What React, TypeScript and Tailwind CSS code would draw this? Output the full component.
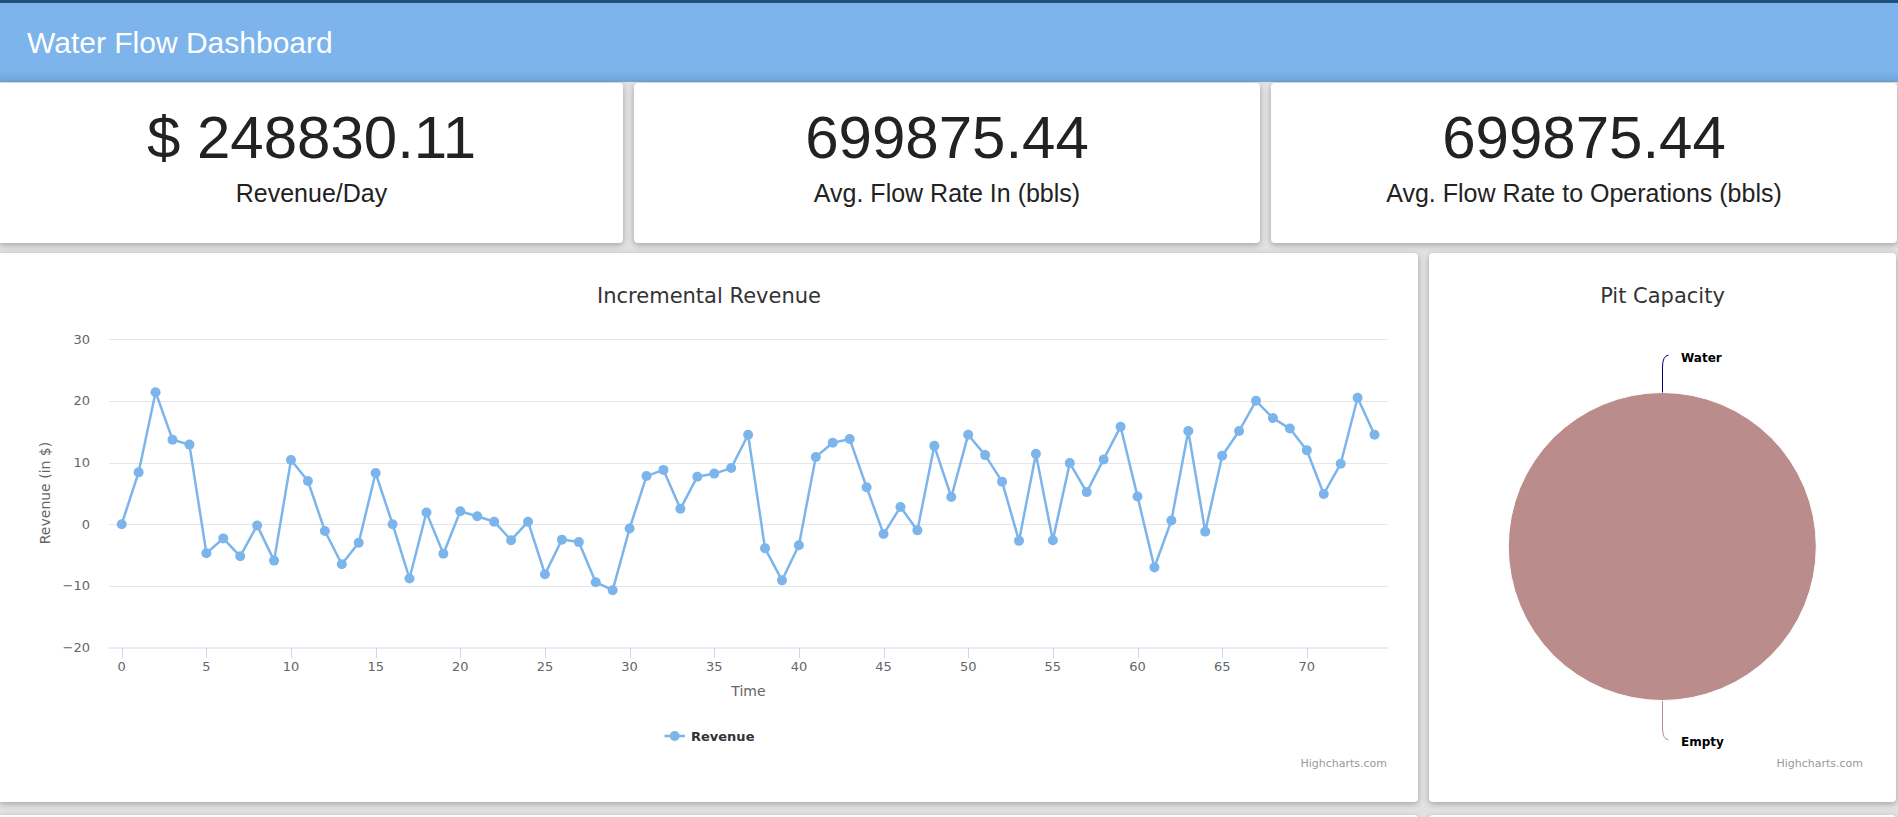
import React from 'react'

const revenue = [
  0, 8.4, 21.4, 13.7, 12.9, -4.7, -2.3, -5.2, -0.2, -5.9,
  10.4, 7.0, -1.1, -6.5, -3.0, 8.3, 0.0, -8.8, 1.9, -4.8,
  2.1, 1.3, 0.4, -2.6, 0.4, -8.1, -2.5, -2.9, -9.4, -10.7,
  -0.7, 7.8, 8.8, 2.5, 7.7, 8.2, 9.1, 14.5, -3.9, -9.1,
  -3.4, 10.9, 13.2, 13.8, 6.0, -1.6, 2.8, -1.0, 12.7, 4.4,
  14.5, 11.2, 6.9, -2.7, 11.4, -2.6, 9.9, 5.2, 10.5, 15.8,
  4.5, -7.0, 0.6, 15.1, -1.2, 11.1, 15.1, 20.0, 17.2, 15.5,
  12.0, 4.9, 9.8, 20.5, 14.5,
]

const stats = [
  { value: '$ 248830.11', label: 'Revenue/Day', width: 'w-[623px] rounded-l-none' },
  { value: '699875.44', label: 'Avg. Flow Rate In (bbls)', width: 'w-[626px]' },
  { value: '699875.44', label: 'Avg. Flow Rate to Operations (bbls)', width: 'w-[626px]' },
]

// plot geometry (px, relative to the chart card)
const PLOT_LEFT = 109
const PLOT_RIGHT = 1388
const xAt = (i: number) => 121.7 + i * 16.93
const yAt = (v: number) => 271.2 - v * 6.17
const fmt = (n: number) => (n < 0 ? '\u2212' + Math.abs(n) : String(n))

function StatCard({ value, label, width }: { value: string; label: string; width: string }) {
  return (
    <div className={`${width} h-[160px] shrink-0 rounded-[4px] bg-white shadow-[0_2px_6px_rgba(0,0,0,0.28)] flex flex-col items-center pt-[25px] text-[#222] font-['Liberation_Sans',Arial,sans-serif]`}>
      <div className="text-[60px] leading-[60px] whitespace-nowrap">{value}</div>
      <div className="mt-[13px] text-[25px] leading-[25px] whitespace-nowrap">{label}</div>
    </div>
  )
}

function RevenueChart() {
  const points = revenue.map((v, i) => [xAt(i), yAt(v)] as const)
  const d = points.map(([x, y], i) => `${i ? 'L' : 'M'}${x.toFixed(1)} ${y.toFixed(1)}`).join(' ')
  const grid = [30, 20, 10, 0, -10]
  const ticks = Array.from({ length: 15 }, (_, k) => k * 5)

  return (
    <svg width={1418} height={549} className="block font-['DejaVu_Sans',sans-serif]">
      <text x={709} y={50} textAnchor="middle" fontSize={21} fill="#333333">
        Incremental Revenue
      </text>

      {grid.map((v) => (
        <line key={v} x1={PLOT_LEFT} x2={PLOT_RIGHT} y1={Math.round(yAt(v)) + 0.5} y2={Math.round(yAt(v)) + 0.5} stroke="#e6e6e6" />
      ))}
      {[...grid, -20].map((v) => (
        <text key={v} x={90} y={yAt(v) + 4.5} textAnchor="end" fontSize={13} fill="#666666">
          {fmt(v)}
        </text>
      ))}

      {/* x axis */}
      <line x1={PLOT_LEFT} x2={PLOT_RIGHT} y1={395} y2={395} stroke="#ccd6eb" />
      {ticks.map((t) => (
        <g key={t}>
          <line x1={Math.round(xAt(t)) + 0.5} x2={Math.round(xAt(t)) + 0.5} y1={395} y2={405} stroke="#ccd6eb" />
          <text x={xAt(t)} y={417.5} textAnchor="middle" fontSize={13} fill="#666666">
            {t}
          </text>
        </g>
      ))}
      <text x={748.5} y={442.5} textAnchor="middle" fontSize={14} fill="#666666">
        Time
      </text>
      <text transform="translate(50,240) rotate(-90)" textAnchor="middle" fontSize={14} fill="#666666">
        Revenue (in $)
      </text>

      {/* series */}
      <path d={d} fill="none" stroke="#7cb5ec" strokeWidth={2.5} strokeLinejoin="round" strokeLinecap="round" />
      {points.map(([x, y], i) => (
        <circle key={i} cx={x} cy={y} r={5} fill="#7cb5ec" />
      ))}

      {/* legend */}
      <line x1={664.5} x2={685} y1={483} y2={483} stroke="#7cb5ec" strokeWidth={2.5} />
      <circle cx={674.7} cy={483} r={5} fill="#7cb5ec" />
      <text x={691} y={488} fontSize={13} fontWeight="bold" fill="#333333">
        Revenue
      </text>

      <text x={1387} y={514} textAnchor="end" fontSize={11} fill="#999999">
        Highcharts.com
      </text>
    </svg>
  )
}

function PitChart() {
  return (
    <svg width={467} height={549} className="block font-['DejaVu_Sans',sans-serif]">
      <text x={233.5} y={50} textAnchor="middle" fontSize={21} fill="#333333">
        Pit Capacity
      </text>

      <circle cx={233.3} cy={293.5} r={154} fill="#bb8c8c" stroke="#ffffff" strokeWidth={1} />

      <path d="M233.5 139.5 L233.5 114 Q233.5 103 239.5 102" fill="none" stroke="#000080" strokeWidth={1} />
      <text x={252} y={108.5} fontSize={12} fontWeight="bold" fill="#000000">
        Water
      </text>

      <path d="M233.5 448 L233.5 475 Q233.5 486 239.5 487" fill="none" stroke="#bb8c8c" strokeWidth={1} />
      <text x={252} y={493} fontSize={12} fontWeight="bold" fill="#000000">
        Empty
      </text>

      <text x={434} y={514} textAnchor="end" fontSize={11} fill="#999999">
        Highcharts.com
      </text>
    </svg>
  )
}

export default function App() {
  return (
    <div className="h-[817px] w-[1898px] overflow-hidden bg-[#e2e2e2]">
      <header className="relative z-0 flex h-[82px] items-center border-t-[3px] border-[#1f4f7d] bg-[linear-gradient(to_bottom,#7cb4eb_86%,#6fa3d6)] pl-[27px]">
        <h1 className="font-['Liberation_Sans',Arial,sans-serif] text-[30px] leading-[30px] text-white">
          Water Flow Dashboard
        </h1>
      </header>

      <div className="relative z-10 mt-[1px] flex gap-[11px]">
        {stats.map((s, i) => (
          <StatCard key={i} {...s} />
        ))}
      </div>

      <div className="relative z-10 mt-[10px] flex gap-[11px]">
        <div className="w-[1418px] h-[549px] shrink-0 overflow-hidden rounded-[4px] rounded-l-none bg-white shadow-[0_2px_6px_rgba(0,0,0,0.28)]">
          <RevenueChart />
        </div>
        <div className="w-[467px] h-[549px] shrink-0 overflow-hidden rounded-[4px] bg-white shadow-[0_2px_6px_rgba(0,0,0,0.28)]">
          <PitChart />
        </div>
      </div>

      <div className="relative z-10 mt-[13px] flex gap-[11px]">
        <div className="w-[1418px] h-[300px] shrink-0 rounded-[4px] rounded-l-none bg-white shadow-[0_2px_6px_rgba(0,0,0,0.28)]" />
        <div className="w-[467px] h-[300px] shrink-0 rounded-[4px] bg-white shadow-[0_2px_6px_rgba(0,0,0,0.28)]" />
      </div>
    </div>
  )
}
